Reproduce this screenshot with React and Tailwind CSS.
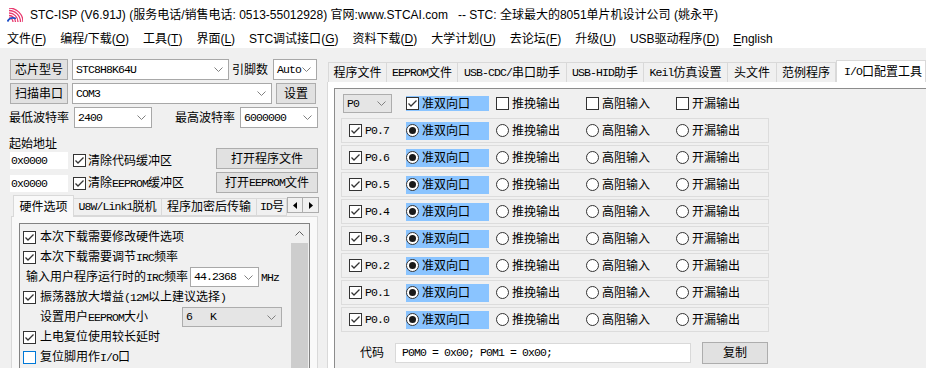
const UI = "font-['Liberation_Sans','Noto_Sans_CJK_SC',sans-serif]";
const MONO = "font-['Liberation_Mono','Noto_Sans_CJK_SC',monospace] text-[11.5px] tracking-[-0.9px] whitespace-pre";

function M({ children }) {
  return <span className={MONO}>{children}</span>;
}

function U({ children }) {
  return <span className="underline underline-offset-[2px]">{children}</span>;
}

function Chevron({ up = false }) {
  return (
    <svg width="9" height="5" viewBox="0 0 9 5" className="shrink-0">
      <polyline
        points={up ? "0.5,4.5 4.5,0.5 8.5,4.5" : "0.5,0.5 4.5,4.5 8.5,0.5"}
        fill="none"
        stroke={up ? "#606060" : "#808080"}
        strokeWidth="1"
      />
    </svg>
  );
}

function CheckBox({ checked = true, focus = false }) {
  return (
    <span
      className={`inline-flex w-[13px] h-[13px] shrink-0 items-center justify-center border bg-white ${
        focus ? "border-[#0078d7]" : "border-[#333333]"
      }`}
    >
      {checked && (
        <svg width="11" height="11" viewBox="0 0 11 11">
          <polyline points="1.5,5.5 4,8 9.5,2.5" fill="none" stroke="#333333" strokeWidth="1.3" />
        </svg>
      )}
    </span>
  );
}

function Radio({ on = false }) {
  return (
    <span className="inline-flex w-[13px] h-[13px] shrink-0 items-center justify-center rounded-full border border-[#333333] bg-white">
      {on && <span className="w-[7px] h-[7px] rounded-full bg-[#1a1a1a]" />}
    </span>
  );
}

function Btn({ children, className = "" }) {
  return (
    <div className={`flex items-center justify-center bg-[#e1e1e1] border border-[#adadad] ${className}`}>
      {children}
    </div>
  );
}

function Combo({ value, gray = false, className = "" }) {
  return (
    <div
      className={`flex items-center justify-between border pl-[3px] pr-[5px] ${
        gray ? "bg-[#e5e5e5] border-[#adadad]" : "bg-white border-[#a8a8a8]"
      } ${className}`}
    >
      <M>{value}</M>
      <Chevron />
    </div>
  );
}

function Logo() {
  return (
    <svg width="16" height="14" viewBox="0 0 16 14" className="shrink-0">
      {[4, 6.5, 9, 11.5, 14].map((r) => (
        <path
          key={r}
          d={`M2 ${14 - r} A${r} ${r} 0 0 1 ${2 + r} 14`}
          fill="none"
          stroke="#e8386e"
          strokeWidth="1.3"
        />
      ))}
      <path d="M0.5 13.5 Q3 8.5 9 10.5" fill="none" stroke="#1d4fc7" strokeWidth="1.8" />
    </svg>
  );
}

function TitleBar() {
  return (
    <div className="h-[30px] bg-white flex items-center pl-[7px]">
      <Logo />
      <span className="ml-[7px] whitespace-pre">
        STC-ISP (V6.91J) (服务电话/销售电话: 0513-55012928) 官网:www.STCAI.com   -- STC: 全球最大的8051单片机设计公司 (姚永平)
      </span>
    </div>
  );
}

const menus = [
  ["文件", "F"],
  ["编程/下载", "O"],
  ["工具", "T"],
  ["界面", "L"],
  ["STC调试接口", "G"],
  ["资料下载", "D"],
  ["大学计划", "U"],
  ["去论坛", "F"],
  ["升级", "U"],
  ["USB驱动程序", "D"],
];

function MenuBar() {
  return (
    <div className="h-[18px] bg-white flex items-center pl-[7px] gap-[14px] whitespace-nowrap">
      {menus.map(([label, key], i) => (
        <span key={i}>
          {label}(<U>{key}</U>)
        </span>
      ))}
      <span>
        <U>E</U>nglish
      </span>
    </div>
  );
}

function ListRow({ children, className = "" }) {
  return <div className={`h-[20px] flex items-center ${className}`}>{children}</div>;
}

function LeftPanel() {
  return (
    <div className="w-[325px] shrink-0 pt-[11px] pl-[10px] flex flex-col">
      <div className="flex items-center h-[21px]">
        <Btn className="w-[58px] h-[21px]">芯片型号</Btn>
        <Combo className="ml-[4px] w-[157px] h-[21px]" value="STC8H8K64U" />
        <span className="ml-[3px] w-[41px]">引脚数</span>
        <Combo className="w-[44px] h-[21px]" value="Auto" />
      </div>
      <div className="flex items-center h-[21px] mt-[3px]">
        <Btn className="w-[58px] h-[21px]">扫描串口</Btn>
        <Combo className="ml-[4px] w-[200px] h-[21px]" value="COM3" />
        <Btn className="ml-[4px] w-[40px] h-[21px]">设置</Btn>
      </div>
      <div className="flex items-center h-[21px] mt-[3px]">
        <span className="-ml-[1px] w-[65px]">最低波特率</span>
        <Combo className="w-[78px] h-[21px]" value="2400" />
        <span className="ml-[23px] w-[65px]">最高波特率</span>
        <Combo className="w-[78px] h-[21px]" value="6000000" />
      </div>

      <div className="flex mt-[1px]">
        <div className="flex flex-col w-[206px]">
          <div className="-ml-[1px] mt-[8px] h-[14px] leading-[14px]">起始地址</div>
          <div className="flex items-center mt-[1px] h-[17px]">
            <div className="w-[58px] h-[17px] bg-white flex items-center pl-[1px]">
              <M>0x0000</M>
            </div>
            <span className="ml-[5px] flex">
              <CheckBox />
            </span>
            <span className="ml-[2px]">清除代码缓冲区</span>
          </div>
          <div className="flex items-center mt-[6px] h-[17px]">
            <div className="w-[58px] h-[17px] bg-white flex items-center pl-[1px]">
              <M>0x0000</M>
            </div>
            <span className="ml-[5px] flex">
              <CheckBox />
            </span>
            <span className="ml-[2px]">
              清除<M>EEPROM</M>缓冲区
            </span>
          </div>
        </div>
        <div className="flex flex-col">
          <Btn className="mt-[19px] w-[102px] h-[21px]">打开程序文件</Btn>
          <Btn className="mt-[3px] w-[102px] h-[21px]">
            打开<M>EEPROM</M>文件
          </Btn>
        </div>
      </div>

      <div className="flex items-end mt-[4px] h-[19px]">
        <div className="w-[277px] h-[22px] flex items-end">
          <div className="ml-[3px] w-[61px] h-[22px] -mb-[1px] relative z-10 bg-[#f9f9f9] border border-b-0 border-[#d9d9d9] flex items-center justify-center shrink-0">
            硬件选项
          </div>
          <div className="w-[88px] h-[18px] bg-[#f0f0f0] border border-[#d9d9d9] border-l-0 flex items-center justify-center shrink-0">
            <M>U8W/Link1</M>脱机
          </div>
          <div className="w-[95px] h-[18px] bg-[#f0f0f0] border border-[#d9d9d9] border-l-0 flex items-center justify-center shrink-0">
            程序加密后传输
          </div>
          <div className="w-[30px] h-[18px] bg-[#f0f0f0] border border-[#d9d9d9] border-l-0 flex items-center pl-[3px] shrink-0">
            <M>ID</M>号
          </div>
        </div>
        <div className="flex mb-[3px] relative z-10">
          <div className="w-[16px] h-[16px] bg-[#f0f0f0] border border-[#adadad] flex items-center justify-center">
            <svg width="4" height="7" viewBox="0 0 4 7">
              <polygon points="4,0 0,3.5 4,7" fill="#000" />
            </svg>
          </div>
          <div className="w-[16px] h-[16px] bg-[#f0f0f0] border border-l-0 border-[#adadad] flex items-center justify-center">
            <svg width="4" height="7" viewBox="0 0 4 7">
              <polygon points="0,0 4,3.5 0,7" fill="#000" />
            </svg>
          </div>
        </div>
      </div>

      <div className="ml-[1px] w-[307px] flex-1 bg-[#f9f9f9] border border-[#d9d9d9] pl-[7px] pt-[6px]">
        <div className="w-[291px] h-[200px] border border-[#828282] bg-[#f0f0f0] flex">
          <div className="flex-1 pt-[3px]">
            <ListRow className="pl-[3px]">
              <CheckBox />
              <span className="ml-[4px]">本次下载需要修改硬件选项</span>
            </ListRow>
            <ListRow className="pl-[3px]">
              <CheckBox />
              <span className="ml-[4px]">
                本次下载需要调节<M>IRC</M>频率
              </span>
            </ListRow>
            <ListRow className="pl-[6px]">
              <span className="w-[164px]">
                输入用户程序运行时的<M>IRC</M>频率
              </span>
              <Combo className="w-[69px] h-[20px]" value="44.2368" />
              <span className="ml-[2px]">
                <M>MHz</M>
              </span>
            </ListRow>
            <ListRow className="pl-[3px]">
              <CheckBox />
              <span className="ml-[4px]">
                振荡器放大增益<M>(12M</M>以上建议选择<M>)</M>
              </span>
            </ListRow>
            <ListRow className="pl-[20px]">
              <span className="w-[142px]">
                设置用户<M>EEPROM</M>大小
              </span>
              <Combo gray className="w-[100px] h-[20px]" value="6   K" />
            </ListRow>
            <ListRow className="pl-[3px]">
              <CheckBox />
              <span className="ml-[4px]">上电复位使用较长延时</span>
            </ListRow>
            <ListRow className="pl-[3px]">
              <CheckBox checked={false} focus />
              <span className="ml-[4px]">
                复位脚用作<M>I/O</M>口
              </span>
            </ListRow>
          </div>
          <div className="w-[17px] mr-[1px] flex flex-col">
            <div className="h-[19px] flex items-center justify-center">
              <Chevron up />
            </div>
            <div className="flex-1 bg-[#cdcdcd]" />
          </div>
        </div>
      </div>
    </div>
  );
}

const rightTabs = [
  [<>程序文件</>, "w-[59px]"],
  [<><M>EEPROM</M>文件</>, "w-[71px]"],
  [<><M>USB-CDC/</M>串口助手</>, "w-[109px]"],
  [<><M>USB-HID</M>助手</>, "w-[77px]"],
  [<><M>Keil</M>仿真设置</>, "w-[84px]"],
  [<>头文件</>, "w-[49px]"],
  [<>范例程序</>, "w-[59px]"],
];

const pins = ["P0.7", "P0.6", "P0.5", "P0.4", "P0.3", "P0.2", "P0.1", "P0.0"];

function RightPanel() {
  return (
    <div className="flex-1 flex flex-col min-w-0">
      <div className="mt-[12px] ml-[3px] h-[22px] flex items-end">
        {rightTabs.map(([label, w], i) => (
          <div
            key={i}
            className={`${w} h-[20px] shrink-0 bg-[#f0f0f0] border border-b-0 border-[#d9d9d9] ${
              i > 0 ? "border-l-0" : ""
            } flex items-center justify-center whitespace-nowrap`}
          >
            {label}
          </div>
        ))}
        <div className="flex-1 h-[22px] bg-white border border-b-0 border-[#d9d9d9] flex items-center pl-[7px] whitespace-nowrap">
          <M>I/O</M>口配置工具
        </div>
      </div>
      <div className="ml-[2px] flex-1 bg-white border-l border-[#d9d9d9] pl-[6px] pt-[6px]">
        <div className="h-full border-l border-t border-[#8c8c8c] bg-[#f0f0f0]">
          <div className="flex items-center h-[19px] mt-[5px]">
            <div className="w-[71px] pl-[8px]">
              <Combo gray className="w-[49px] h-[19px]" value="P0" />
            </div>
            <div className="w-[90px]">
              <div className="w-[83px] h-[15px] bg-[#8ac4ff] flex items-center">
                <CheckBox />
                <span className="ml-[3px]">准双向口</span>
              </div>
            </div>
            {["推挽输出", "高阻输入", "开漏输出"].map((t) => (
              <div key={t} className="w-[90px] flex items-center">
                <CheckBox checked={false} />
                <span className="ml-[3px]">{t}</span>
              </div>
            ))}
          </div>

          <div className="mt-[5px] ml-[6px] flex flex-col gap-[2px]">
            {pins.map((p) => (
              <div key={p} className="w-[428px] h-[25px] border border-[#dcdcdc] flex items-center">
                <div className="w-[64px] pl-[7px] flex items-center">
                  <CheckBox />
                  <span className="ml-[3px]">
                    <M>{p}</M>
                  </span>
                </div>
                <div className="w-[90px]">
                  <div className="w-[83px] h-[18px] bg-[#8ac4ff] flex items-center">
                    <Radio on />
                    <span className="ml-[3px]">准双向口</span>
                  </div>
                </div>
                {["推挽输出", "高阻输入", "开漏输出"].map((t) => (
                  <div key={t} className="w-[90px] flex items-center">
                    <Radio />
                    <span className="ml-[3px]">{t}</span>
                  </div>
                ))}
              </div>
            ))}
          </div>

          <div className="mt-[10px] flex items-center h-[22px]">
            <span className="ml-[25px]">代码</span>
            <div className="ml-[11px] w-[296px] h-[20px] bg-white border border-[#d9d9d9] flex items-center pl-[6px]">
              <M>P0M0 = 0x00; P0M1 = 0x00;</M>
            </div>
            <Btn className="ml-[11px] w-[66px] h-[22px]">复制</Btn>
          </div>
        </div>
      </div>
    </div>
  );
}

export default function App() {
  return (
    <div className={`w-[926px] h-[368px] overflow-hidden bg-[#f0f0f0] text-[12px] leading-none text-black ${UI}`}>
      <TitleBar />
      <MenuBar />
      <div className="flex h-[320px]">
        <LeftPanel />
        <RightPanel />
      </div>
    </div>
  );
}
